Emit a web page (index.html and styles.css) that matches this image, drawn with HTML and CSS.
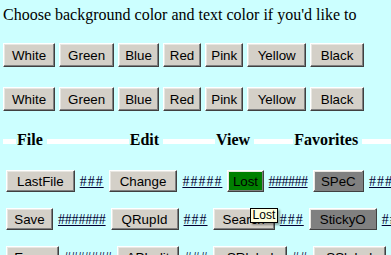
FILE: index.html
```html
<!DOCTYPE html>
<html lang="en">
<head>
    <meta charset="UTF-8">
    <title>Menu</title>
    <link rel="stylesheet" href="styles.css">
</head>
<body>
    <p class="intro">Choose background color and text color if you'd like to</p>

    <div class="color-row">
        <button class="btn">White</button>
        <button class="btn">Green</button>
        <button class="btn pad-s">Blue</button>
        <button class="btn pad-s">Red</button>
        <button class="btn pad-xs">Pink</button>
        <button class="btn pad-l">Yellow</button>
        <button class="btn pad-l">Black</button>
    </div>

    <div class="color-row">
        <button class="btn">White</button>
        <button class="btn">Green</button>
        <button class="btn pad-s">Blue</button>
        <button class="btn pad-s">Red</button>
        <button class="btn pad-xs">Pink</button>
        <button class="btn pad-l">Yellow</button>
        <button class="btn pad-l">Black</button>
    </div>

    <div class="menu-head">
        <span class="head head-file">File</span>
        <span class="head head-edit">Edit</span>
        <span class="head head-view">View</span>
        <span class="head head-fav">Favorites</span>
    </div>

    <div class="menu-row">
        <button class="btn menu-btn">LastFile</button>
        <a href="#" class="filler wide">###</a>
        <button class="btn menu-btn">Change</button>
        <a href="#" class="filler wide">#####</a>
        <button class="btn menu-btn lost">Lost</button>
        <a href="#" class="filler tight">######</a>
        <button class="btn menu-btn fav pad-7">SPeC</button>
        <a href="#" class="filler wide">###</a>
    </div>

    <div class="menu-row">
        <button class="btn menu-btn pad-7">Save</button>
        <a href="#" class="filler snug">#######</a>
        <button class="btn menu-btn">QRupId</button>
        <a href="#" class="filler wide">###</a>
        <span class="tip-anchor">
            <button class="btn menu-btn pad-9">Search</button>
            <span class="tooltip">Lost</span>
        </span>
        <a href="#" class="filler wide">###</a>
        <button class="btn menu-btn fav">StickyO</button>
        <a href="#" class="filler wide">##</a>
    </div>

    <div class="menu-row">
        <button class="btn menu-btn pad-7">Errors</button>
        <a href="#" class="filler snug">#######</a>
        <button class="btn menu-btn pad-9">APIedit</button>
        <a href="#" class="filler wide">###</a>
        <button class="btn menu-btn pad-12">SRlabel</button>
        <a href="#" class="filler wide">##</a>
        <button class="btn menu-btn pad-12">SSlabel</button>
    </div>
</body>
</html>
```

FILE: styles.css
```css
html, body {
    overflow: hidden;
}
body {
    margin: 0;
    padding: 6px 0 0 3px;
    background-color: #ccffff;
    font-family: "Liberation Serif", "Times New Roman", serif;
    font-size: 16px;
    color: #000;
    white-space: nowrap;
}
.intro {
    margin: 0;
    line-height: 18px;
}

/* classic win2k style buttons */
.btn {
    box-sizing: border-box;
    height: 24px;
    margin: 0;
    padding: 0 8px;
    font-family: "Liberation Sans", Arial, sans-serif;
    font-size: 13.33px;
    color: #000;
    background: #d4d0c8;
    border: 1px solid;
    border-color: #ffffff #404040 #404040 #ffffff;
    box-shadow: inset -1px -1px #808080, inset 1px 1px #e8e6e1;
    border-radius: 0;
}
.pad-xs { padding: 0 5px; }
.pad-s { padding: 0 6px; }
.pad-l { padding: 0 9.5px; }

.color-row {
    display: flex;
    gap: 4px;
    margin-top: 19px;
}
.color-row + .color-row {
    margin-top: 20px;
}

.menu-head {
    display: flex;
    margin-top: 20px;
    line-height: 18px;
    font-weight: bold;
    background: linear-gradient(to bottom, transparent 8px, #ffffff 8px, #ffffff 13px, transparent 13px);
}
.head {
    background: #ccffff;
    padding: 0 4px 0 1px;
}
.head-file { margin-left: 13px; }
.head-edit { margin-left: 82px; }
.head-view { margin-left: 52px; }
.head-fav { margin-left: 39px; }

.menu-row {
    display: flex;
    align-items: baseline;
    gap: 5px;
    padding-left: 3px;
    margin-top: 21px;
}
.menu-row + .menu-row {
    margin-top: 16px;
}
.menu-btn {
    height: 22px;
    padding: 0 10px;
}
.menu-btn.pad-7 { padding: 0 7.3px; }
.menu-btn.pad-9 { padding: 0 9px; }
.menu-btn.pad-12 { padding: 0 12.4px; }
.lost {
    background: #008000;
    padding: 0 4.5px;
}
.fav {
    background: #808080;
}
.filler {
    font-size: 14px;
    color: #000033;
}
.filler.wide { letter-spacing: 1px; }
.filler.tight { letter-spacing: -0.5px; }
.filler.snug { letter-spacing: -0.2px; }

.tip-anchor {
    position: relative;
    display: flex;
}
.tooltip {
    position: absolute;
    left: 37px;
    top: 0;
    padding: 0 2px;
    font-family: "Liberation Sans", Arial, sans-serif;
    font-size: 12px;
    line-height: 13px;
    background: #ffffe1;
    border: 1px solid #000;
    box-shadow: 2px 2px 2px rgba(0,0,0,0.35);
}
```
